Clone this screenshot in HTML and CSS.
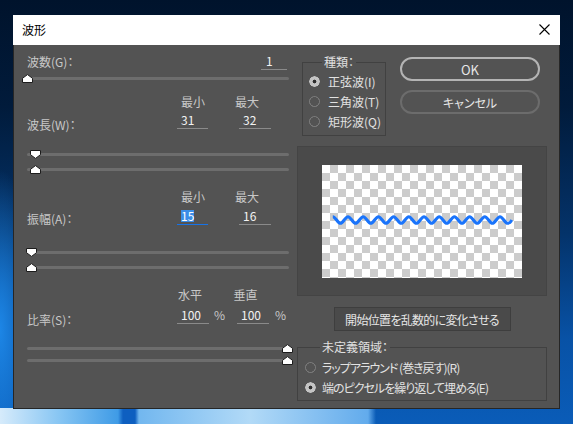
FILE: index.html
```html
<!DOCTYPE html>
<html lang="ja">
<head>
<meta charset="utf-8">
<title>波形</title>
<link rel="stylesheet" href="styles.css">
</head>
<body>
<div class="window">
  <div class="titlebar">
    <span class="title">波形</span>
    <svg class="close" width="11" height="11" viewBox="0 0 11 11"><path d="M0.5 0.5L10.5 10.5M10.5 0.5L0.5 10.5" stroke="#000" stroke-width="1.1" fill="none"/></svg>
  </div>
  <div class="dialog">
    <div class="left">
      <div class="row row-g">
        <span class="label">波数(G)：</span>
        <span class="field field-g">1</span>
      </div>
      <div class="slider s1"><div class="track"></div><svg class="thumb up" style="left:-5px" width="11" height="9" viewBox="0 0 11 9"><path d="M0.5 8.5V4.3L5.5 0.6L10.5 4.3V8.5Z"/></svg></div>

      <div class="heads h1"><span class="head">最小</span><span class="head">最大</span></div>
      <div class="row row-w">
        <span class="label">波長(W)：</span>
        <span class="field f1">31</span>
        <span class="field f2">32</span>
      </div>
      <div class="slider s2a"><div class="track"></div><svg class="thumb down" style="left:3px" width="11" height="9" viewBox="0 0 11 9"><path d="M0.5 0.5V4.7L5.5 8.4L10.5 4.7V0.5Z"/></svg></div>
      <div class="slider s2b"><div class="track"></div><svg class="thumb up" style="left:3px" width="11" height="9" viewBox="0 0 11 9"><path d="M0.5 8.5V4.3L5.5 0.6L10.5 4.3V8.5Z"/></svg></div>

      <div class="heads h2"><span class="head">最小</span><span class="head">最大</span></div>
      <div class="row row-a">
        <span class="label">振幅(A)：</span>
        <span class="field f1 active"><span class="sel">15</span></span>
        <span class="field f2">16</span>
      </div>
      <div class="slider s3a"><div class="track"></div><svg class="thumb down" style="left:-1px" width="11" height="9" viewBox="0 0 11 9"><path d="M0.5 0.5V4.7L5.5 8.4L10.5 4.7V0.5Z"/></svg></div>
      <div class="slider s3b"><div class="track"></div><svg class="thumb up" style="left:-1px" width="11" height="9" viewBox="0 0 11 9"><path d="M0.5 8.5V4.3L5.5 0.6L10.5 4.3V8.5Z"/></svg></div>

      <div class="heads h3"><span class="head">水平</span><span class="head">垂直</span></div>
      <div class="row row-s">
        <span class="label">比率(S)：</span>
        <span class="field fs1">100</span>
        <span class="pct p1">%</span>
        <span class="field fs2">100</span>
        <span class="pct p2">%</span>
      </div>
      <div class="slider s4a"><div class="track"></div><svg class="thumb up" style="left:255px" width="11" height="9" viewBox="0 0 11 9"><path d="M0.5 8.5V4.3L5.5 0.6L10.5 4.3V8.5Z"/></svg></div>
      <div class="slider s4b"><div class="track"></div><svg class="thumb up" style="left:255px" width="11" height="9" viewBox="0 0 11 9"><path d="M0.5 8.5V4.3L5.5 0.6L10.5 4.3V8.5Z"/></svg></div>
    </div>

    <div class="right">
      <div class="top">
        <fieldset class="group kind">
          <legend>種類：</legend>
          <div class="opt"><span class="radio on"></span><span>正弦波(I)</span></div>
          <div class="opt"><span class="radio"></span><span>三角波(T)</span></div>
          <div class="opt"><span class="radio"></span><span>矩形波(Q)</span></div>
        </fieldset>
        <div class="buttons">
          <div class="btn ok">OK</div>
          <div class="btn cancel">キャンセル</div>
        </div>
      </div>

      <div class="preview">
        <div class="canvas">
          <svg width="200" height="113" viewBox="0 0 200 113">
            <path class="wave" d="M10.8 51.7C13.57 51.7 15.63 58.3 18.4 58.3S23.23 51.7 26 51.7S30.83 58.3 33.6 58.3S38.43 51.7 41.2 51.7S46.03 58.3 48.8 58.3S53.63 51.7 56.4 51.7S61.23 58.3 64 58.3S68.83 51.7 71.6 51.7S76.43 58.3 79.2 58.3S84.03 51.7 86.8 51.7S91.63 58.3 94.4 58.3S99.23 51.7 102 51.7S106.83 58.3 109.6 58.3S114.43 51.7 117.2 51.7S122.03 58.3 124.8 58.3S129.63 51.7 132.4 51.7S137.23 58.3 140 58.3S144.83 51.7 147.6 51.7S152.43 58.3 155.2 58.3S160.03 51.7 162.8 51.7S167.63 58.3 170.4 58.3S175.23 51.7 178 51.7S182.83 58.3 185.6 58.3S189 56.5 189.8 55"/>
          </svg>
        </div>
      </div>

      <div class="btn random">開始位置を乱数的に変化させる</div>

      <fieldset class="group undef">
        <legend>未定義領域：</legend>
        <div class="opt"><span class="radio"></span><span class="tight">ラップアラウンド (巻き戻す)(R)</span></div>
        <div class="opt"><span class="radio on"></span><span class="tight">端のピクセルを繰り返して埋める(E)</span></div>
      </fieldset>
    </div>
  </div>
</div>
</body>
</html>
```

FILE: styles.css
```css
* { box-sizing: border-box; }

html, body {
  margin: 0;
  padding: 0;
  width: 573px;
  height: 424px;
  overflow: hidden;
}

body {
  font-family: "Noto Sans CJK JP", "Noto Sans", sans-serif;
  font-feature-settings: "palt";
  font-size: 12px;
  background:
    linear-gradient(90deg, #d6ebfb 0px, #86c5f3 60px, #3f9be6 118px, #0e5fc0 123px, #0e5fc0 135px, #72b7ef 139px, #b2daf7 250px, #62abec 368px, rgba(0,0,0,0) 376px) left bottom / 100% 16px no-repeat,
    radial-gradient(ellipse 40px 160px at 0 330px, #1d86e6, rgba(0,0,0,0)),
    linear-gradient(180deg, #00132c 0%, #011b3b 25%, #04336a 55%, #0852a6 80%, #0a5cb8 100%);
}

.window {
  margin: 15px 0 0 13px;
  width: 547px;
}

.titlebar {
  height: 30px;
  background: #ffffff;
  display: flex;
  align-items: center;
  justify-content: space-between;
  padding: 0 10px 0 9px;
}

.title {
  color: #000;
  font-size: 12px;
  line-height: 16px;
}

.close { display: block; margin-top: -1px; }

.dialog {
  height: 364px;
  background: #535353;
  border: 1px solid #262626;
  border-top: 0;
  display: flex;
  gap: 8px;
}

/* ---------- left column ---------- */
.left {
  width: 275px;
  padding: 8px 0 0 13px;
  display: flex;
  flex-direction: column;
  color: #c9c9c9;
}

.row {
  display: flex;
  align-items: flex-start;
}

.label {
  width: 150px;
  line-height: 17px;
  color: #c8c8c8;
  white-space: nowrap;
}

.field {
  display: flex;
  align-items: center;
  height: 17px;
  line-height: 16px;
  padding-left: 4px;
  border-bottom: 1px solid #8a8a8a;
  color: #f2f2f2;
}

.row-g { height: 17px; }
.row-g .label { flex: 1; }
.field-g { width: 26px; margin-right: 2px; padding-left: 5px; }

.f1 { width: 31px; }
.f2 { width: 32px; margin-left: 31px; }

.field.active { border-bottom-color: #1773e8; }
.sel {
  display: inline-block;
  height: 12px;
  line-height: 12px;
  background: #3b8ee8;
  color: #ffffff;
}

.row-w, .row-a, .row-s { height: 21px; }
.row-w .label, .row-s .label { margin-top: 4px; }
.row-a .label { margin-top: 2px; }

.fs1 { width: 32px; }
.fs2 { width: 32px; }
.pct { line-height: 16px; color: #c8c8c8; }
.p1 { width: 28px; padding-left: 5px; }
.p2 { padding-left: 6px; }

.heads {
  display: flex;
  height: 16px;
  line-height: 16px;
  padding-left: 154px;
  color: #c8c8c8;
}
.head { width: 62px; }
.h3 { padding-left: 151px; }
.h3 .head { width: 65px; }

.slider {
  position: relative;
  width: 262px;
  height: 12px;
  flex: none;
}
.track {
  margin-top: 4px;
  height: 3px;
  border-radius: 2px;
  background: #6d6d6d;
}
.thumb {
  position: absolute;
  top: 1px;
  display: block;
}
.thumb path { fill: #ffffff; stroke: #1c1c1c; stroke-width: 1; stroke-linejoin: round; }

.s1 { margin-top: 3px; }
.h1 { margin-top: 9px; }
.row-w { margin-top: 2px; }
.s2a { margin-top: 16px; }
.s2b { margin-top: 3px; }
.h2 { margin-top: 13px; }
.row-a { margin-top: 3px; }
.s3a { margin-top: 18px; }
.s3b { margin-top: 3px; }
.h3 { margin-top: 13px; }
.row-s { margin-top: 4px; }
.s4a { margin-top: 15px; }
.s4b { margin-top: 0; }

/* ---------- right column ---------- */
.right {
  width: 250px;
  padding-top: 10px;
  display: flex;
  flex-direction: column;
  color: #dcdcdc;
}

.top { display: flex; align-items: flex-start; }

.group {
  margin: 0;
  border: 1px solid #414141;
  min-width: 0;
}
.group legend {
  line-height: 14px;
  padding: 0 2px;
  color: #e0e0e0;
}

.kind {
  width: 84px;
  margin-left: 5px;
  padding: 2px 0 4px 6px;
}
.kind legend { margin-left: 13px; }

.opt {
  display: flex;
  align-items: center;
  height: 20px;
  gap: 8px;
  white-space: nowrap;
  color: #e2e2e2;
}

.radio {
  width: 11px;
  height: 11px;
  border-radius: 50%;
  background: radial-gradient(circle, rgba(0,0,0,0) 0 4.2px, #7a7a7a 4.6px 5.4px, rgba(0,0,0,0) 5.6px);
  flex: none;
}
.radio.on {
  background: radial-gradient(circle, #2e2e2e 0 1.6px, #c4c4c4 2.2px 5px, rgba(196,196,196,0) 5.6px);
}

.buttons {
  margin: 2px 0 0 14px;
  display: flex;
  flex-direction: column;
  gap: 9px;
}

.btn {
  display: flex;
  align-items: center;
  justify-content: center;
  color: #e6e6e6;
}
.ok, .cancel {
  width: 140px;
  height: 24px;
  border-radius: 12px;
}
.ok { border: 2px solid #b4b4b4; font-size: 13px; }
.cancel { border: 2px solid #6c6c6c; }

.preview {
  margin-top: 10px;
  height: 150px;
  background: #4a4a4a;
  border: 1px solid #444444;
  display: flex;
  justify-content: center;
  padding-top: 18px;
}

.canvas {
  width: 200px;
  height: 113px;
  background-color: #ffffff;
  background-image: conic-gradient(#cccccc 0 25%, #ffffff 0 50%, #cccccc 0 75%, #ffffff 0);
  background-size: 16px 16px;
}
.canvas svg { display: block; }
.wave { fill: none; stroke: #1a74fb; stroke-width: 3; }

.random {
  margin-top: 11px;
  align-self: center;
  width: 177px;
  height: 24px;
  background: #4a4a4a;
  border: 1px solid #3e3e3e;
  letter-spacing: -0.7px;
}

.undef {
  margin-top: 9px;
  width: 250px;
  padding: 3px 0 3px 7px;
}
.undef legend { margin-left: 15px; }
.undef .opt { gap: 6px; }
.tight { letter-spacing: -1px; }
```
